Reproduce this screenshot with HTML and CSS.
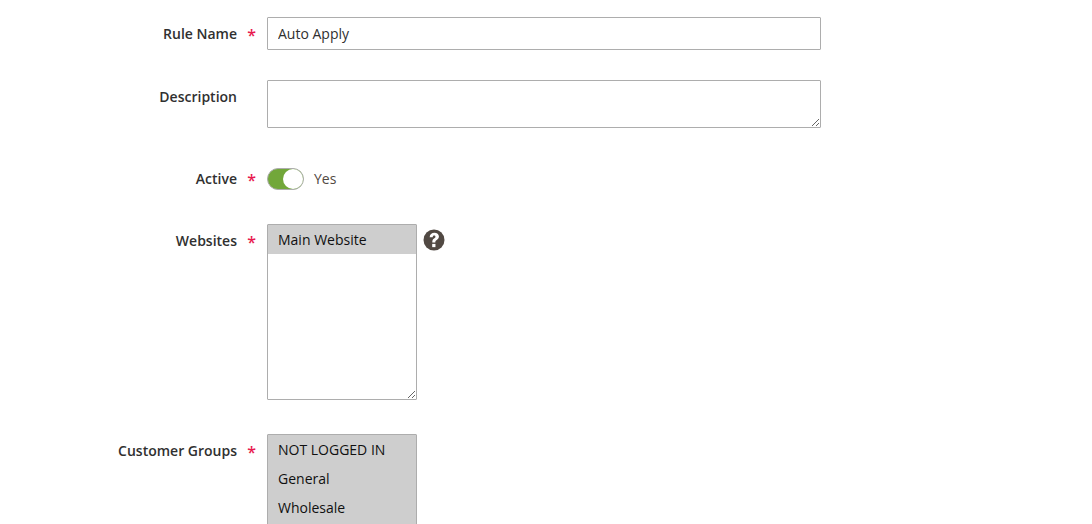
FILE: index.html
```html
<!DOCTYPE html>
<html lang="en">
<head>
    <meta charset="UTF-8">
    <title>Cart Price Rule</title>
    <link rel="stylesheet" href="styles.css">
</head>
<body>
<form class="rule-form">
    <div class="field field-name">
        <label class="field-label required" for="ruleName">Rule Name</label>
        <input class="text-input" type="text" id="ruleName" value="Auto Apply">
    </div>
    <div class="field field-description">
        <label class="field-label" for="description">Description</label>
        <textarea class="text-area" id="description"></textarea>
    </div>
    <div class="field field-active">
        <span class="field-label required">Active</span>
        <span class="toggle"><span class="toggle-knob"></span></span>
        <span class="toggle-text">Yes</span>
    </div>
    <div class="field field-websites">
        <label class="field-label required" for="websites">Websites</label>
        <select class="multi-select" id="websites" multiple>
            <option selected>Main Website</option>
        </select>
        <span class="help-icon">
            <svg width="22" height="22" viewBox="0 0 22 22">
                <circle cx="11" cy="11" r="10.5" fill="#514943"/>
                <g transform="translate(-1.7 -1.7) scale(1.16)">
                    <path d="M7.2 8.5c.1-2.4 1.8-3.8 4.1-3.8 2.2 0 3.9 1.2 3.9 3.2 0 1.4-.8 2.2-1.9 3-.9.6-1.2 1-1.2 1.8v.5H9.5v-.7c0-1.4.5-2.1 1.5-2.8.8-.6 1.2-1 1.2-1.6 0-.7-.4-1-1.1-1-.8 0-1.2.5-1.3 1.5z" fill="#fff"/>
                    <rect x="9.4" y="14.3" width="2.8" height="2.8" fill="#fff"/>
                </g>
            </svg>
        </span>
    </div>
    <div class="field field-groups">
        <label class="field-label required" for="groups">Customer Groups</label>
        <select class="multi-select" id="groups" multiple>
            <option selected>NOT LOGGED IN</option>
            <option selected>General</option>
            <option selected>Wholesale</option>
            <option selected>Retailer</option>
        </select>
    </div>
</form>
</body>
</html>
```

FILE: styles.css
```css
html, body {
  height: 524px;
  overflow: hidden;
}
body {
  margin: 0;
  background: #fff;
  font-family: "Open Sans", sans-serif;
  font-size: 14px;
  color: #303030;
}
.rule-form {
  padding-top: 17px;
}
.field {
  display: flex;
  align-items: flex-start;
  margin-bottom: 34px;
}
.field-name {
  margin-bottom: 30px;
}
.field-description {
  margin-bottom: 40px;
}
.field-label {
  box-sizing: border-box;
  width: 267px;
  padding-right: 30px;
  padding-top: 7px;
  text-align: right;
  font-weight: 600;
  line-height: 19px;
  color: #303030;
  position: relative;
}
.field-active .field-label {
  padding-top: 1px;
}
.required::after {
  content: "*";
  position: absolute;
  right: 11px;
  color: #e81a4f;
  font-size: 16px;
  font-weight: 600;
  line-height: 19px;
  margin-top: 2px;
}
.text-input,
.text-area,
.multi-select {
  box-sizing: border-box;
  border: 1px solid #adadad;
  border-radius: 1px;
  background: #fff;
  font-family: inherit;
  font-size: 14px;
  color: #303030;
  outline: none;
}
.text-input {
  width: 554px;
  height: 33px;
  padding: 0 10px;
}
.text-area {
  display: block;
  width: 554px;
  height: 48px;
  padding: 6px 10px;
  resize: vertical;
}
.toggle {
  box-sizing: border-box;
  width: 37px;
  height: 22px;
  border: 1px solid #adadad;
  border-radius: 12px;
  background: #72a73a;
  position: relative;
}
.toggle-knob {
  position: absolute;
  top: 0;
  right: 0;
  width: 20px;
  height: 20px;
  border-radius: 50%;
  background: #fff;
}
.toggle-text {
  margin-left: 10px;
  padding-top: 1px;
  line-height: 19px;
  color: #514943;
}
.multi-select {
  display: block;
  width: 150px;
  height: 176px;
  padding: 0;
  resize: vertical;
  overflow: hidden;
}
.multi-select option {
  padding: 5px 10px;
  line-height: 19px;
  min-height: 19px;
}
.help-icon {
  margin-left: 6px;
  margin-top: 5px;
  height: 22px;
}
```
